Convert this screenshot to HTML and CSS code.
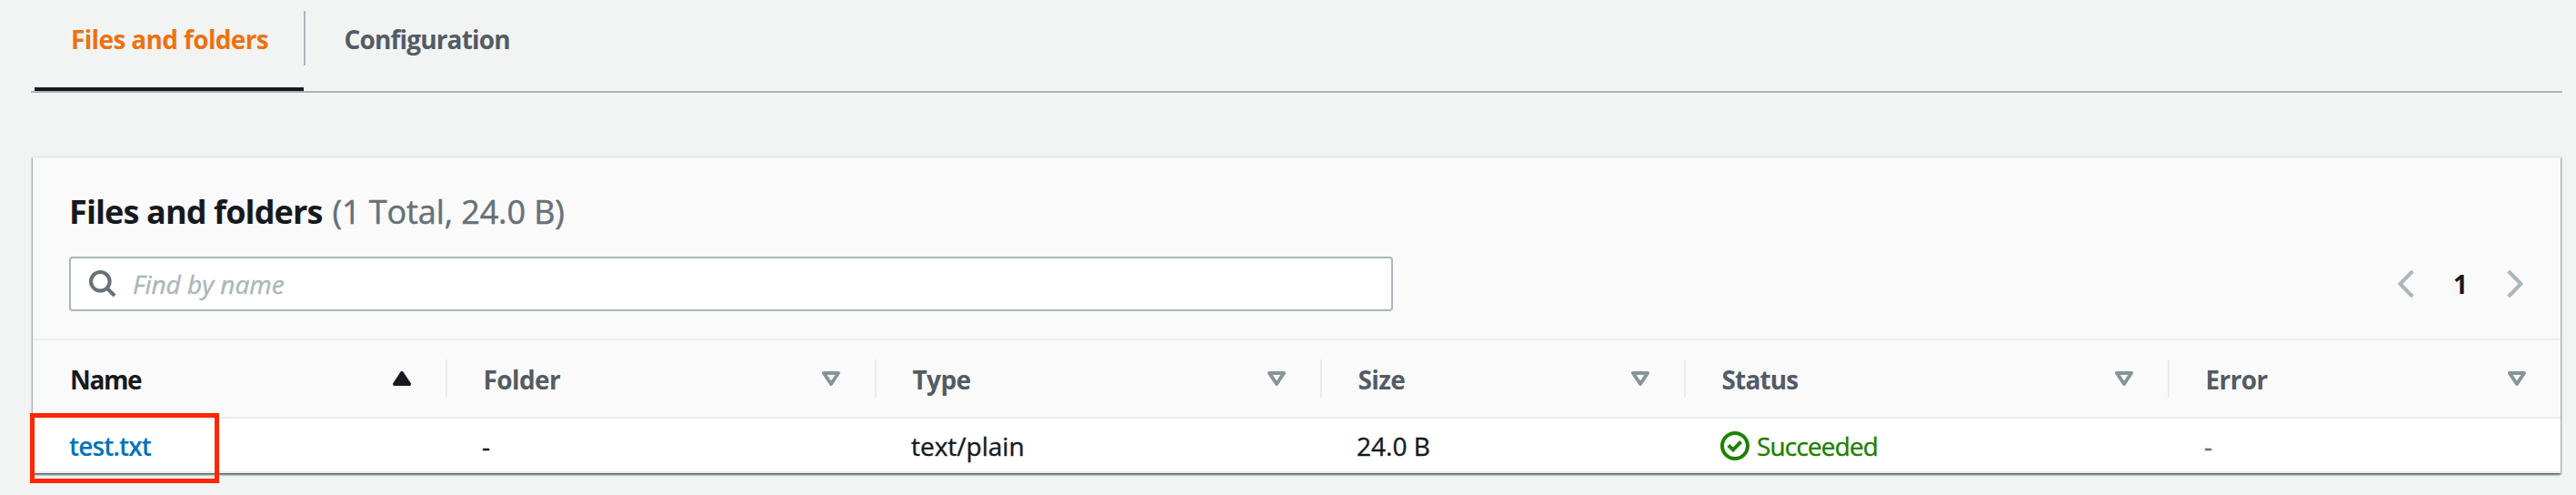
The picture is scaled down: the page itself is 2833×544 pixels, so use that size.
FILE: index.html
```
<!DOCTYPE html>
<html lang="en">
<head>
<meta charset="utf-8">
<title>Files and folders</title>
<link rel="stylesheet" href="styles.css">
</head>
<body>
<nav class="tabs">
  <a class="tab tab-active"><span class="t-tab1">Files and folders</span></a>
  <span class="tab-divider"></span>
  <a class="tab"><span class="t-tab2">Configuration</span></a>
</nav>
<main class="card">
  <header class="card-header">
    <h2 class="title"><span class="t-title">Files and folders</span><span class="count">(1 Total, 24.0 B)</span></h2>
    <div class="tools">
      <div class="search">
        <svg class="search-icon" width="30" height="30" viewBox="0 0 30 30" fill="none" stroke="#687078" stroke-width="4"><circle cx="12.3" cy="12.3" r="10.3"/><path d="M19.5 19.5 28 28"/></svg>
        <span class="placeholder">Find by name</span>
      </div>
      <div class="pagination">
        <svg width="18" height="32" viewBox="0 0 18 32" fill="none" stroke="#aab7b8" stroke-width="4"><path d="M16.3 2 2.6 16l13.700 14"/></svg>
        <span class="page">1</span>
        <svg width="18" height="32" viewBox="0 0 18 32" fill="none" stroke="#aab7b8" stroke-width="4"><path d="M1.700 2l13.700 14L1.700 30"/></svg>
      </div>
    </div>
  </header>
  <div class="row head">
    <div class="th sorted"><span class="t-name">Name</span><svg class="sort" width="20" height="16" viewBox="0 0 20 16"><path d="M10 2 18 14H2z" fill="#16191f" stroke="#16191f" stroke-width="4" stroke-linejoin="round"/></svg></div>
    <div class="th"><span class="t-folder">Folder</span><svg class="sort" width="20" height="16" viewBox="0 0 20 16"><path d="M2 2h16L10 14z" fill="none" stroke="#879596" stroke-width="4" stroke-linejoin="round"/></svg></div>
    <div class="th"><span class="t-type">Type</span><svg class="sort" width="20" height="16" viewBox="0 0 20 16"><path d="M2 2h16L10 14z" fill="none" stroke="#879596" stroke-width="4" stroke-linejoin="round"/></svg></div>
    <div class="th"><span class="t-size">Size</span><svg class="sort" width="20" height="16" viewBox="0 0 20 16"><path d="M2 2h16L10 14z" fill="none" stroke="#879596" stroke-width="4" stroke-linejoin="round"/></svg></div>
    <div class="th"><span class="t-status">Status</span><svg class="sort" width="20" height="16" viewBox="0 0 20 16"><path d="M2 2h16L10 14z" fill="none" stroke="#879596" stroke-width="4" stroke-linejoin="round"/></svg></div>
    <div class="th last"><span class="t-error">Error</span><svg class="sort" width="20" height="16" viewBox="0 0 20 16"><path d="M2 2h16L10 14z" fill="none" stroke="#879596" stroke-width="4" stroke-linejoin="round"/></svg></div>
  </div>
  <div class="row body">
    <div class="td link"><span class="t-file">test.txt</span></div>
    <div class="td">-</div>
    <div class="td"><span class="t-plain">text/plain</span></div>
    <div class="td"><span class="t-bytes">24.0 B</span></div>
    <div class="td success"><svg width="32" height="32" viewBox="0 0 32 32" fill="none" stroke="#1d8102" stroke-width="4"><circle cx="16" cy="16" r="14"/><path d="M8.800 15.500 14 20.300l8.700-8.800"/></svg><span class="t-succeeded">Succeeded</span></div>
    <div class="td muted">-</div>
  </div>
</main>
<div class="highlight"></div>
</body>
</html>
```

FILE: styles.css
```
* { box-sizing: border-box; }
body {
  margin: 0;
  height: 544px;
  padding: 0 15px 0 34px;
  overflow: hidden;
  background: #f2f4f3;
  color: #16191f;
  font: 28px/40px "Open Sans", "Noto Sans", sans-serif;
  white-space: nowrap;
}
.tabs {
  display: flex;
  height: 102px;
  padding-left: 4px;
  border-bottom: 2px solid #aab7b8;
}
.tab {
  height: 100px;
  padding: 23px 42.5px 0;
  color: #545b64;
  font-weight: 700;
}
.tab-active {
  width: 296px;
  padding: 23px 0 0 40px;
  color: #ec7211;
  border-bottom: 4px solid #16191f;
}
.t-tab1 { letter-spacing: -0.65px; }
.t-tab2 { letter-spacing: -0.85px; }
.tab-divider {
  width: 2px;
  height: 60px;
  margin-top: 12px;
  background: #aab7b8;
}
.card {
  width: 2780px;
  height: 348px;
  margin: 70px 0 0 2px;
  border-top: 2px solid #eaeded;
  border-bottom: 2px solid #eaeded;
  background: #fff;
  box-shadow: 0 2px 2px 0 rgba(0, 28, 36, .5), 1px 1px 2px 0 rgba(0, 28, 36, .25), -1px 1px 2px 0 rgba(0, 28, 36, .25);
}
.card-header {
  height: 200px;
  padding: 35px 40px 0;
  background: #fafafa;
  border-bottom: 2px solid #eaeded;
}
.title {
  display: flex;
  margin: 0;
  font-size: 36px;
  line-height: 48px;
}
.t-title { letter-spacing: -0.87px; }
.count {
  margin-left: 11px;
  color: #687078;
  font-weight: 400;
  letter-spacing: -0.1px;
  -webkit-text-stroke: 0.5px currentColor;
}
.tools {
  display: flex;
  justify-content: space-between;
  align-items: center;
  height: 60px;
  margin-top: 25px;
}
.search {
  display: flex;
  align-items: center;
  width: 1456px;
  height: 60px;
  padding-left: 20px;
  background: #fff;
  border: 2px solid #aab7b8;
  border-radius: 4px;
}
.placeholder {
  margin-left: 18px;
  color: #aab7b8;
  font-style: italic;
  -webkit-text-stroke: 0.4px currentColor;
}
.pagination {
  display: flex;
  align-items: center;
  justify-content: space-between;
  width: 138px;
  margin-right: 1px;
}
.page { font-weight: 700; }
.row {
  display: grid;
  grid-template-columns: 456px 472px 490px 400px 532px 430px;
}
.head {
  height: 86px;
  background: #fafafa;
  border-bottom: 2px solid #eaeded;
}
.th {
  display: flex;
  align-items: center;
  justify-content: space-between;
  padding-left: 39.5px;
  color: #545b64;
  font-weight: 700;
  letter-spacing: -0.6px;
}
.th span { padding-top: 1px; }
.t-name { letter-spacing: -1.35px; }
.t-status { letter-spacing: -0.85px; }
.th::after {
  content: "";
  width: 2px;
  height: 42px;
  background: #eaeded;
}
.last::after { display: none; }
.sorted { padding-left: 41px; color: #16191f; }
.sort { margin: 0 38px 0 auto; }
.body { height: 58px; -webkit-text-stroke: 0.4px currentColor; }
.td {
  display: flex;
  align-items: center;
  gap: 8px;
  padding: 2px 0 0 38px;
}
.link {
  padding-left: 40px;
  color: #0073bb;
  font-weight: 600;
  letter-spacing: -0.9px;
  -webkit-text-stroke: 0;
}
.success { color: #1d8102; letter-spacing: -0.85px; }
.muted { color: #687078; }
.highlight {
  position: absolute;
  left: 33px;
  top: 454px;
  width: 208px;
  height: 77px;
  border: 5px solid #ff2600;
}
```
